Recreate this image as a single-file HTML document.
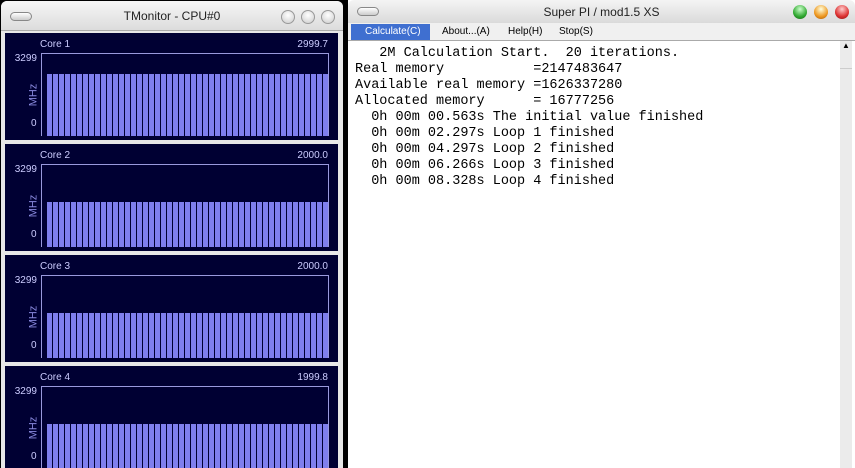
<!DOCTYPE html>
<html><head><meta charset="utf-8"><style>
*{margin:0;padding:0;box-sizing:border-box}
html,body{width:855px;height:468px;background:#000;overflow:hidden}
body{position:relative;font-family:"Liberation Sans","Noto Sans CJK JP",sans-serif}
.lw{position:absolute;left:1px;top:1px;width:342px;height:480px;background:#e8e8e8;border-radius:6px 6px 0 0}
.tb{position:absolute;left:0;right:0;top:0;height:30px;background:linear-gradient(#f6f6f6,#dcdcdc);border-radius:6px 6px 0 0;border-bottom:1px solid #aaa}
.tt{position:absolute;left:0;right:0;top:8px;text-align:center;font-size:12px;color:#222}
.pill{position:absolute;left:9px;top:11px;width:22px;height:9px;border:1px solid #888;border-radius:5px;background:linear-gradient(#fff,#ccc)}
.cb{position:absolute;top:9px;width:14px;height:14px;border-radius:50%;border:1px solid #999;background:radial-gradient(circle at 50% 35%,#fff,#ccc)}
.p{position:absolute;left:5px;width:333px;height:107px;background:#000033}
.p .n{position:absolute;left:35px;top:6px;font-size:10px;color:#ccccff}
.p .v{position:absolute;right:10px;top:6px;font-size:10px;color:#ccccff}
.p .m{position:absolute;right:301px;top:20px;font-size:10px;color:#ccccff}
.p .z{position:absolute;left:26px;top:85px;font-size:10px;color:#ccccff}
.p .u{position:absolute;left:17px;top:56px;font-size:11px;color:#8888dd;transform:rotate(-90deg);transform-origin:center}
.box{position:absolute;left:36px;top:20px;width:288px;height:83px;border:1px solid #9999dd;border-bottom:none}
.bars{position:absolute;left:5px;right:0;bottom:0;background:repeating-linear-gradient(90deg,#7f7fee 0 5px,#000033 5px 6px)}
.rw{position:absolute;left:348px;top:0;width:507px;height:480px;background:#fff}
.rtb{position:absolute;left:0;right:0;top:0;height:23px;background:linear-gradient(#f4f4f4,#dadada);border-radius:6px 6px 0 0}
.menu{position:absolute;left:0;right:0;top:23px;height:18px;background:#f0f0f0;border-bottom:1px solid #aaa;font-size:10px}
.menu span{position:absolute;top:3px;color:#000}
.txt{position:absolute;left:7px;top:46px;font-family:"Liberation Mono",monospace;font-size:13.5px;line-height:16px;white-space:pre;color:#000}
.sb{position:absolute;right:3px;top:41px;width:12px;bottom:0;background:#ebebeb}
.light{position:absolute;top:5px;width:14px;height:14px;border-radius:50%}
</style></head><body>
<div class="lw">
 <div class="tb"><div class="pill"></div><div class="tt">TMonitor - CPU#0</div>
 <div class="cb" style="left:280px"></div><div class="cb" style="left:300px"></div><div class="cb" style="left:320px"></div></div>
</div>
<div class="p" style="top:33px"><div class="n">Core 1</div><div class="v">2999.7</div><div class="m">3299</div><div class="u">MHz</div><div class="z">0</div><div class="box"><div class="bars" style="height:62px"></div></div></div>
<div class="p" style="top:144px"><div class="n">Core 2</div><div class="v">2000.0</div><div class="m">3299</div><div class="u">MHz</div><div class="z">0</div><div class="box"><div class="bars" style="height:45px"></div></div></div>
<div class="p" style="top:255px"><div class="n">Core 3</div><div class="v">2000.0</div><div class="m">3299</div><div class="u">MHz</div><div class="z">0</div><div class="box"><div class="bars" style="height:45px"></div></div></div>
<div class="p" style="top:366px"><div class="n">Core 4</div><div class="v">1999.8</div><div class="m">3299</div><div class="u">MHz</div><div class="z">0</div><div class="box"><div class="bars" style="height:45px"></div></div></div>
<div class="rw">
 <div class="rtb"><div class="pill" style="left:9px;top:7px"></div><div class="tt" style="top:5px">Super PI / mod1.5 XS</div>
 <div class="light" style="left:445px;background:radial-gradient(circle at 50% 30%,#cfc,#3a3 60%,#161)"></div>
 <div class="light" style="left:466px;background:radial-gradient(circle at 50% 30%,#ffd,#e92 60%,#a50)"></div>
 <div class="light" style="left:487px;background:radial-gradient(circle at 50% 30%,#fcc,#d33 60%,#811)"></div></div>
 <div class="menu"><div style="position:absolute;left:3px;top:1px;width:79px;height:16px;background:#3f6fd0"></div>
 <span style="left:17px;color:#fff">Calculate(C)</span><span style="left:94px">About...(A)</span><span style="left:160px">Help(H)</span><span style="left:211px">Stop(S)</span></div>
 <div class="txt">   2M Calculation Start.  20 iterations.
Real memory           =2147483647
Available real memory =1626337280
Allocated memory      = 16777256
  0h 00m 00.563s The initial value finished
  0h 00m 02.297s Loop 1 finished
  0h 00m 04.297s Loop 2 finished
  0h 00m 06.266s Loop 3 finished
  0h 00m 08.328s Loop 4 finished</div>
 <div class="sb"><div style="position:absolute;top:0;left:0;width:12px;height:28px;border-bottom:1px solid #ccc;font-size:8px;text-align:center">▲</div></div>
</div>
</body></html>
